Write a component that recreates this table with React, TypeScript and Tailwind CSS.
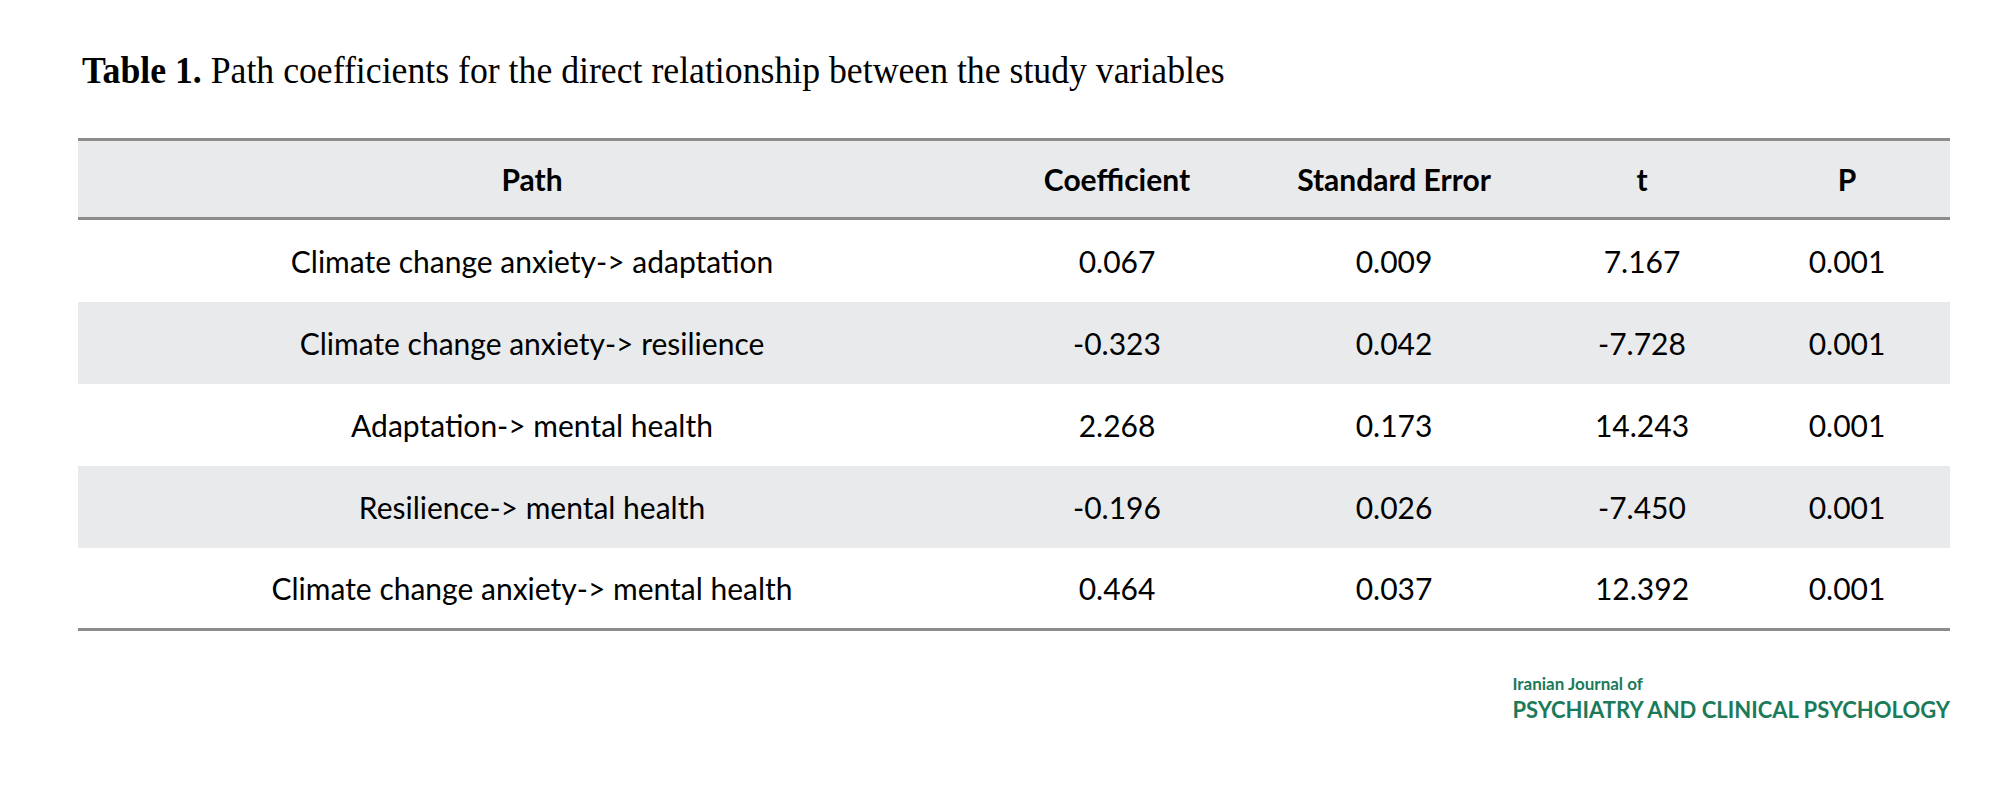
const rows = [
	{ path: "Climate change anxiety-> adaptation", coef: "0.067", se: "0.009", t: "7.167", p: "0.001" },
	{ path: "Climate change anxiety-> resilience", coef: "-0.323", se: "0.042", t: "-7.728", p: "0.001" },
	{ path: "Adaptation-> mental health", coef: "2.268", se: "0.173", t: "14.243", p: "0.001" },
	{ path: "Resilience-> mental health", coef: "-0.196", se: "0.026", t: "-7.450", p: "0.001" },
	{ path: "Climate change anxiety-> mental health", coef: "0.464", se: "0.037", t: "12.392", p: "0.001" },
];

const cols = "grid grid-cols-[908px_262px_292px_204px_206px]";

export default function App() {
	return (
		<div className="h-[796px] w-[2000px] overflow-hidden bg-white text-black">
			<div className="pl-[82px] pt-[48px]">
				<h1 className="inline-block origin-left scale-x-[0.94] whitespace-nowrap font-['Liberation_Serif',serif] text-[38px] leading-[44px]">
					<span className="font-bold">Table 1.</span> Path coefficients for the direct relationship between the study variables
				</h1>
			</div>
			<div className="ml-[78px] mt-[46px] w-[1872px] border-y-[3px] border-[#8c8c8c] font-['Lato',sans-serif] text-[30px]">
				<div className={`${cols} h-[79px] items-center border-b-[3px] border-[#8c8c8c] bg-[#e9eaec] text-center font-bold`}>
					<div>Path</div>
					<div>Coefficient</div>
					<div>Standard Error</div>
					<div>t</div>
					<div>P</div>
				</div>
				{rows.map((r, i) => (
					<div
						key={r.path}
						className={`${cols} ${i === 4 ? "h-[80px]" : "h-[82px]"} items-center text-center ${i % 2 === 1 ? "bg-[#e9eaec]" : "bg-white"}`}
					>
						<div>{r.path}</div>
						<div>{r.coef}</div>
						<div>{r.se}</div>
						<div>{r.t}</div>
						<div>{r.p}</div>
					</div>
				))}
			</div>
			<div className="flex justify-end pr-[50px] pt-[43px]">
				<div className="font-['Lato',sans-serif] text-[#1b7a5a]">
					<div className="text-[17px] font-bold leading-[20px]">Iranian Journal of</div>
					<div className="mt-[2px] whitespace-nowrap text-[22px] font-bold leading-[27px]">PSYCHIATRY AND CLINICAL PSYCHOLOGY</div>
				</div>
			</div>
		</div>
	);
}
